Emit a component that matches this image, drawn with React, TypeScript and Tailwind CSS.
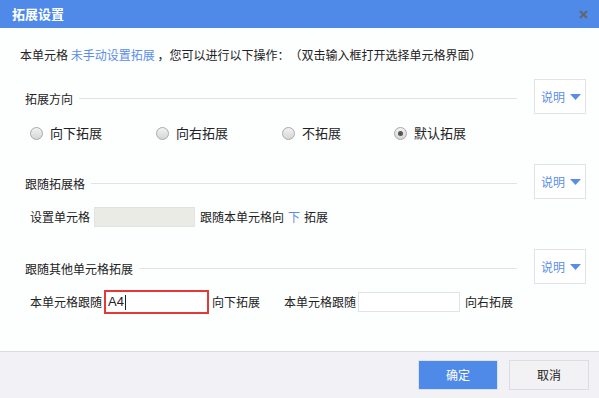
import React from 'react';

const font = { fontFamily: '"Noto Sans CJK SC", "Microsoft YaHei", sans-serif' };

function ExplainButton() {
    return (
        <button className="w-[52px] h-[35px] border border-[#dfe3ea] bg-white flex items-center pl-[6px] gap-[5px] text-[12px] text-[#5b8de8] shrink-0">
            <span>说明</span>
            <svg width="11" height="6" viewBox="0 0 11 6">
                <polygon points="0,0 11,0 5.5,6" fill="#5b8de8" />
            </svg>
        </button>
    );
}

function SectionHeader({ title }: { title: string }) {
    return (
        <div className="flex items-center pl-[25px] pr-[13px]">
            <span className="text-[12px] text-[#222] pt-[4px]">{title}</span>
            <div className="flex-1 h-px bg-[#dfe3ea] ml-[6px] mr-[17px] mt-[3px]" />
            <ExplainButton />
        </div>
    );
}

function Radio({ label, checked, width }: { label: string; checked?: boolean; width: string }) {
    return (
        <label className={`flex items-center gap-[7px] ${width}`}>
            <span className="w-[13px] h-[13px] rounded-full border border-[#a9a9a9] bg-gradient-to-b from-[#f2f2f2] to-[#d6d6d6] flex items-center justify-center">
                {checked && <span className="w-[5px] h-[5px] rounded-full bg-[#555]" />}
            </span>
            <span className="text-[13px] text-[#222]">{label}</span>
        </label>
    );
}

export default function App() {
    return (
        <div className="w-[599px] h-[398px] flex flex-col bg-[#fdfefe] overflow-hidden [text-spacing-trim:space-all]" style={font}>
            {/* 标题栏 */}
            <div className="h-[28px] bg-[#4f8ae8] flex items-center justify-between pl-[12px] pr-[11px] shrink-0">
                <span className="text-white text-[13px] font-bold">拓展设置</span>
                <svg width="9" height="9" viewBox="0 0 9 9">
                    <path d="M1 1 L8 8 M8 1 L1 8" stroke="#666" strokeWidth="2" />
                </svg>
            </div>

            {/* 内容 */}
            <div className="flex-1 flex flex-col">
                <p className="mt-[19px] pl-[20px] text-[12px] leading-[16px] text-[#222]">
                    本单元格 <span className="text-[#5b8de8]">未手动设置拓展</span> ，您可以进行以下操作：（双击输入框打开选择单元格界面）
                </p>

                <div className="mt-[16px]">
                    <SectionHeader title="拓展方向" />
                </div>
                <div className="mt-[11px] h-[16px] pl-[30px] flex items-center">
                    <Radio label="向下拓展" width="w-[126px]" />
                    <Radio label="向右拓展" width="w-[126px]" />
                    <Radio label="不拓展" width="w-[112px]" />
                    <Radio label="默认拓展" checked width="w-[80px]" />
                </div>

                <div className="mt-[23px]">
                    <SectionHeader title="跟随拓展格" />
                </div>
                <div className="mt-[8px] pl-[30px] flex items-center text-[12px] text-[#222]">
                    <span>设置单元格</span>
                    <div className="w-[101px] h-[20px] bg-[#ebebe6] border border-[#e0e2e6] ml-[4px] mr-[5px]" />
                    <span>跟随本单元格向</span>
                    <span className="text-[#5b8de8] mx-[4px]">下</span>
                    <span>拓展</span>
                </div>

                <div className="mt-[22px]">
                    <SectionHeader title="跟随其他单元格拓展" />
                </div>
                <div className="mt-[6px] pl-[30px] flex items-center text-[12px] text-[#222]">
                    <span>本单元格跟随</span>
                    <div className="w-[105px] h-[24px] border-2 border-[#e53935] bg-white ml-[2px] mr-[3px] flex items-center pl-[2px]">
                        <span className="text-[13px] text-[#222]" style={{ fontFamily: '"Liberation Sans", Arial, sans-serif' }}>A4</span>
                        <span className="w-px h-[15px] bg-[#222] ml-px" />
                    </div>
                    <span>向下拓展</span>
                    <span className="ml-[24px]">本单元格跟随</span>
                    <div className="w-[102px] h-[20px] border border-[#dfe3ea] bg-white ml-[2px] mr-[5px]" />
                    <span>向右拓展</span>
                </div>
            </div>

            {/* 底部 */}
            <div className="h-[47px] shrink-0 border-t border-[#dcdcdc] bg-[#f2f2f6] flex justify-end gap-[11px] pt-[8px] pr-[10px]">
                <button className="w-[80px] h-[30px] bg-[#4f8ae8] border border-[#d9e3f3] text-white text-[12px]">确定</button>
                <button className="w-[80px] h-[30px] bg-[#f2f2f5] border border-[#dcdde2] text-[#222] text-[12px]">取消</button>
            </div>
        </div>
    );
}
